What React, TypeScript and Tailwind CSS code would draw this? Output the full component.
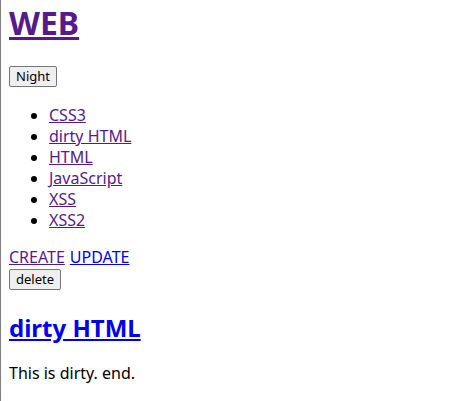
import React from "react";

const topics = ["CSS3", "dirty HTML", "HTML", "JavaScript", "XSS", "XSS2"];

export default function App() {
  return (
    <div className="min-h-[401px] border-l border-[#808080] bg-white px-2 pt-[2px] text-[16px] leading-[21px] text-black font-['Noto_Sans','Liberation_Sans',sans-serif]">
      <h1 className="text-[32px] font-bold leading-[42px]">
        <a href="#" className="text-[#551a8b] underline">WEB</a>
      </h1>

      <div className="mt-[21px]">
        <button className="h-[21px] rounded-[2px] border border-[#767676] bg-[#efefef] px-[6px] text-[13px] leading-[15px] text-black">
          Night
        </button>
      </div>

      <ul className="mt-[18px] mb-4 list-disc pl-10">
        {topics.map((t) => (
          <li key={t}>
            <a href="#" className="text-[#551a8b] underline">{t}</a>
          </li>
        ))}
      </ul>

      <div className="flex gap-[5px]">
        <a href="#" className="text-[#551a8b] underline">CREATE</a>
        <a href="#" className="text-[#0000ee] underline">UPDATE</a>
      </div>
      <div>
        <button className="h-[21px] rounded-[2px] border border-[#767676] bg-[#efefef] px-[6px] text-[13px] leading-[15px] text-black">
          delete
        </button>
      </div>

      <h2 className="mt-[22px] text-[24px] font-bold leading-[32px]">
        <a href="#" className="text-[#0000ee] underline">dirty HTML</a>
      </h2>
      <p className="mt-[19px]">This is dirty. end.</p>
    </div>
  );
}
